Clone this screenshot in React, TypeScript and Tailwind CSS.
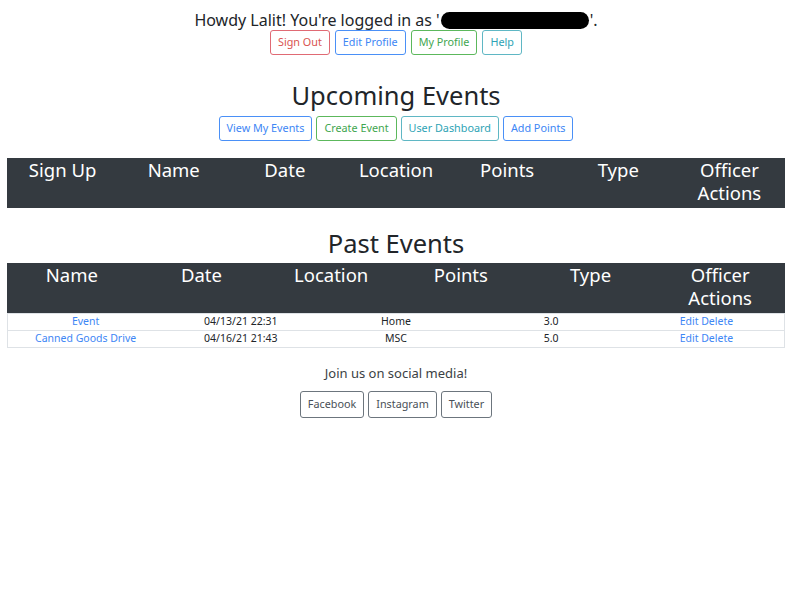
import React from "react";

const font = { fontFamily: '"Noto Sans", "Open Sans", sans-serif' };

function Btn({ label, cls }: { label: string; cls: string }) {
  return (
    <button className={`h-[25px] px-[7px] rounded-[3px] border text-[10.8px] leading-none bg-white ${cls}`}>
      {label}
    </button>
  );
}

const blue = "border-[#4a90f7] text-[#3d86f5]";
const green = "border-[#5cb85c] text-[#3fa64f]";
const red = "border-[#e06a74] text-[#d9534f]";
const teal = "border-[#5fb7c4] text-[#2ea3b5]";
const gray = "border-[#6c757d] text-[#495057]";

export default function App() {
  const upcoming = ["Sign Up", "Name", "Date", "Location", "Points", "Type", "Officer Actions"];
  const past = ["Name", "Date", "Location", "Points", "Type", "Officer Actions"];
  const rows = [
    ["Event", "04/13/21 22:31", "Home", "3.0"],
    ["Canned Goods Drive", "04/16/21 21:43", "MSC", "5.0"],
  ];
  return (
    <div className="w-[800px] h-[600px] bg-white text-[#212529]" style={font}>
      <div className="w-[792px]">
        <div className="flex flex-col items-center pt-[9px]">
          <div className="text-[16px] leading-[22px] flex items-center">
            <span>Howdy Lalit! You're logged in as '</span>
            <span className="inline-block w-[148px] h-[17px] bg-black rounded-full mx-[1px]" />
            <span>'.</span>
          </div>
          <div className="flex gap-[5px] mt-[-1px]">
            <Btn label="Sign Out" cls={red} />
            <Btn label="Edit Profile" cls={blue} />
            <Btn label="My Profile" cls={green} />
            <Btn label="Help" cls={teal} />
          </div>
          <h1 className="text-[25.5px] leading-[36px] mt-[22px]">Upcoming Events</h1>
          <div className="flex gap-[4px] mt-[3px]">
            <Btn label="View My Events" cls={blue} />
            <Btn label="Create Event" cls={green} />
            <Btn label="User Dashboard" cls={teal} />
            <Btn label="Add Points" cls={blue} />
          </div>
        </div>
        <div className="px-[7px] mt-[17px]">
          <div className="grid grid-cols-7 bg-[#343a40] text-white h-[50px] pt-[1px]">
            {upcoming.map((h) => (
              <div key={h} className="text-center text-[18.5px] leading-[22.5px] px-2">
                {h}
              </div>
            ))}
          </div>
        </div>
        <div className="flex justify-center mt-[17px]">
          <h1 className="text-[25.5px] leading-[36px]">Past Events</h1>
        </div>
        <div className="px-[7px] mt-[2px]">
          <div className="grid grid-cols-6 bg-[#343a40] text-white h-[50px] pt-[1px]">
            {past.map((h) => (
              <div key={h} className="text-center text-[18.5px] leading-[22.5px] px-2">
                {h}
              </div>
            ))}
          </div>
          <div className="border-l border-r border-t border-[#dee2e6] text-[10.5px]">
            {rows.map((r) => (
              <div key={r[0]} className="grid grid-cols-5 h-[17px] items-center border-b border-[#dee2e6]">
                <div className="text-center text-[#3d86f5]">{r[0]}</div>
                <div className="text-center">{r[1]}</div>
                <div className="text-center">{r[2]}</div>
                <div className="text-center">{r[3]}</div>
                <div className="text-center text-[#3d86f5]">
                  <span>Edit</span> <span>Delete</span>
                </div>
              </div>
            ))}
          </div>
        </div>
        <div className="flex flex-col items-center mt-[15px]">
          <div className="text-[13px] leading-[20px] text-[#3b3f44]">Join us on social media!</div>
          <div className="flex gap-[4px] mt-[8px]">
            <button className={`h-[27px] px-[7px] rounded-[3px] border text-[10.8px] bg-white ${gray}`}>Facebook</button>
            <button className={`h-[27px] px-[7px] rounded-[3px] border text-[10.8px] bg-white ${gray}`}>Instagram</button>
            <button className={`h-[27px] px-[7px] rounded-[3px] border text-[10.8px] bg-white ${gray}`}>Twitter</button>
          </div>
        </div>
      </div>
    </div>
  );
}
